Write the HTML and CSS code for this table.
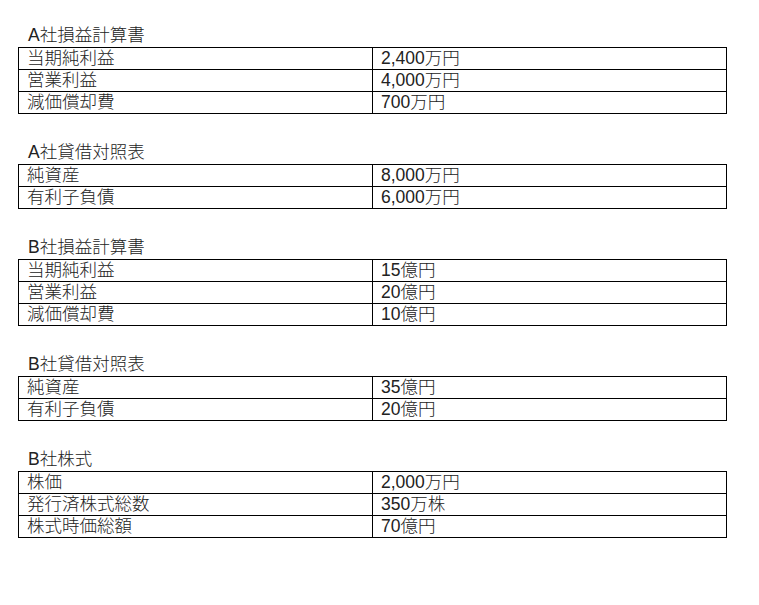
FILE: index.html
```html
<!DOCTYPE html>
<html lang="ja">
<head>
<meta charset="utf-8">
<title>財務データ</title>
<link rel="stylesheet" href="styles.css">
</head>
<body>
<div class="page">
  <section class="block">
    <div class="title">A社損益計算書</div>
    <table class="sheet">
      <tr><td>当期純利益</td><td>2,400万円</td></tr>
      <tr><td>営業利益</td><td>4,000万円</td></tr>
      <tr><td>減価償却費</td><td>700万円</td></tr>
    </table>
  </section>
  <section class="block">
    <div class="title">A社貸借対照表</div>
    <table class="sheet">
      <tr><td>純資産</td><td>8,000万円</td></tr>
      <tr><td>有利子負債</td><td>6,000万円</td></tr>
    </table>
  </section>
  <section class="block">
    <div class="title">B社損益計算書</div>
    <table class="sheet">
      <tr><td>当期純利益</td><td>15億円</td></tr>
      <tr><td>営業利益</td><td>20億円</td></tr>
      <tr><td>減価償却費</td><td>10億円</td></tr>
    </table>
  </section>
  <section class="block">
    <div class="title">B社貸借対照表</div>
    <table class="sheet">
      <tr><td>純資産</td><td>35億円</td></tr>
      <tr><td>有利子負債</td><td>20億円</td></tr>
    </table>
  </section>
  <section class="block">
    <div class="title">B社株式</div>
    <table class="sheet">
      <tr><td>株価</td><td>2,000万円</td></tr>
      <tr><td>発行済株式総数</td><td>350万株</td></tr>
      <tr><td>株式時価総額</td><td>70億円</td></tr>
    </table>
  </section>
</div>
</body>
</html>
```

FILE: styles.css
```css
html, body {
  margin: 0;
  padding: 0;
  background: #ffffff;
}

body {
  margin: 8px;
  font-family: "Liberation Sans", Arial, "Noto Sans CJK JP", sans-serif;
  font-size: 17.5px;
  font-weight: 300;
  color: #222222;
}

.page {
  padding-left: 10px;
  padding-top: 16px;
  display: flex;
  flex-direction: column;
  gap: 27px;
}

.block {
  display: flex;
  flex-direction: column;
}

.title {
  line-height: 22px;
  height: 22px;
  padding-left: 10px;
  margin-bottom: 1px;
}

.sheet {
  width: 709px;
  border-collapse: collapse;
  table-layout: fixed;
}

.sheet td {
  width: 50%;
  border: 1px solid #000000;
  padding: 0 8px;
  line-height: 21px;
  height: 21px;
  white-space: nowrap;
  overflow: hidden;
}
```
